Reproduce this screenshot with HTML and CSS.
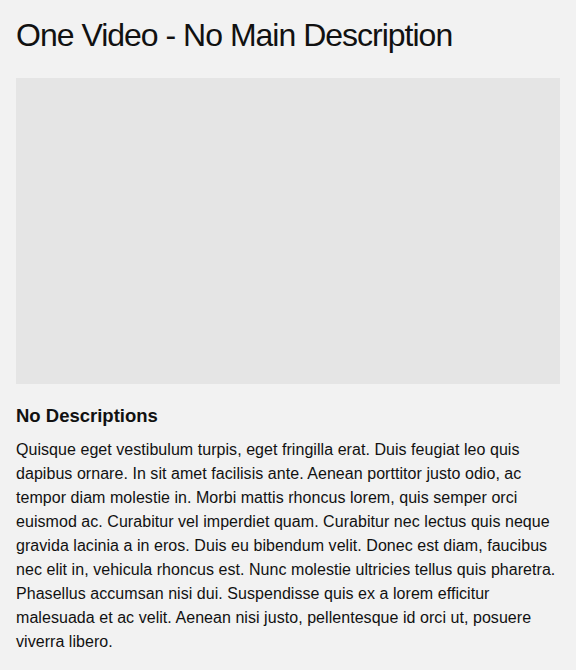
FILE: index.html
```html
<!DOCTYPE html>
<html lang="en">
<head>
<meta charset="utf-8">
<title>One Video - No Main Description</title>
<link rel="stylesheet" href="styles.css">
</head>
<body>
<main class="page">
  <h1 class="title">One Video - No Main Description</h1>
  <div class="video"></div>
  <h2 class="subtitle">No Descriptions</h2>
  <p class="body">Quisque eget vestibulum turpis, eget fringilla erat. Duis feugiat leo quis dapibus ornare. In sit amet facilisis ante. Aenean porttitor justo odio, ac tempor diam molestie in. Morbi mattis rhoncus lorem, quis semper orci euismod ac. Curabitur vel imperdiet quam. Curabitur nec lectus quis neque gravida lacinia a in eros. Duis eu bibendum velit. Donec est diam, faucibus nec elit in, vehicula rhoncus est. Nunc molestie ultricies tellus quis pharetra. Phasellus accumsan nisi dui. Suspendisse quis ex a lorem efficitur malesuada et ac velit. Aenean nisi justo, pellentesque id orci ut, posuere viverra libero.</p>
</main>
</body>
</html>
```
FILE: styles.css
```css
html, body {
  margin: 0;
  padding: 0;
  background: #f2f2f2;
}
.page {
  padding: 16px;
  color: #111;
  font-family: "Liberation Sans", Arial, sans-serif;
}
.title {
  margin: 0;
  font-weight: 400;
  font-size: 32px;
  line-height: 38px;
  letter-spacing: -1px;
}
.video {
  margin-top: 24px;
  width: 100%;
  aspect-ratio: 16 / 9;
  background: #e5e5e5;
}
.subtitle {
  margin: 20px 0 0;
  font-size: 18.5px;
  line-height: 24px;
  font-weight: 700;
}
.body {
  margin: 10px 0 0;
  font-size: 16px;
  line-height: 24px;
  letter-spacing: 0.05px;
}
```
